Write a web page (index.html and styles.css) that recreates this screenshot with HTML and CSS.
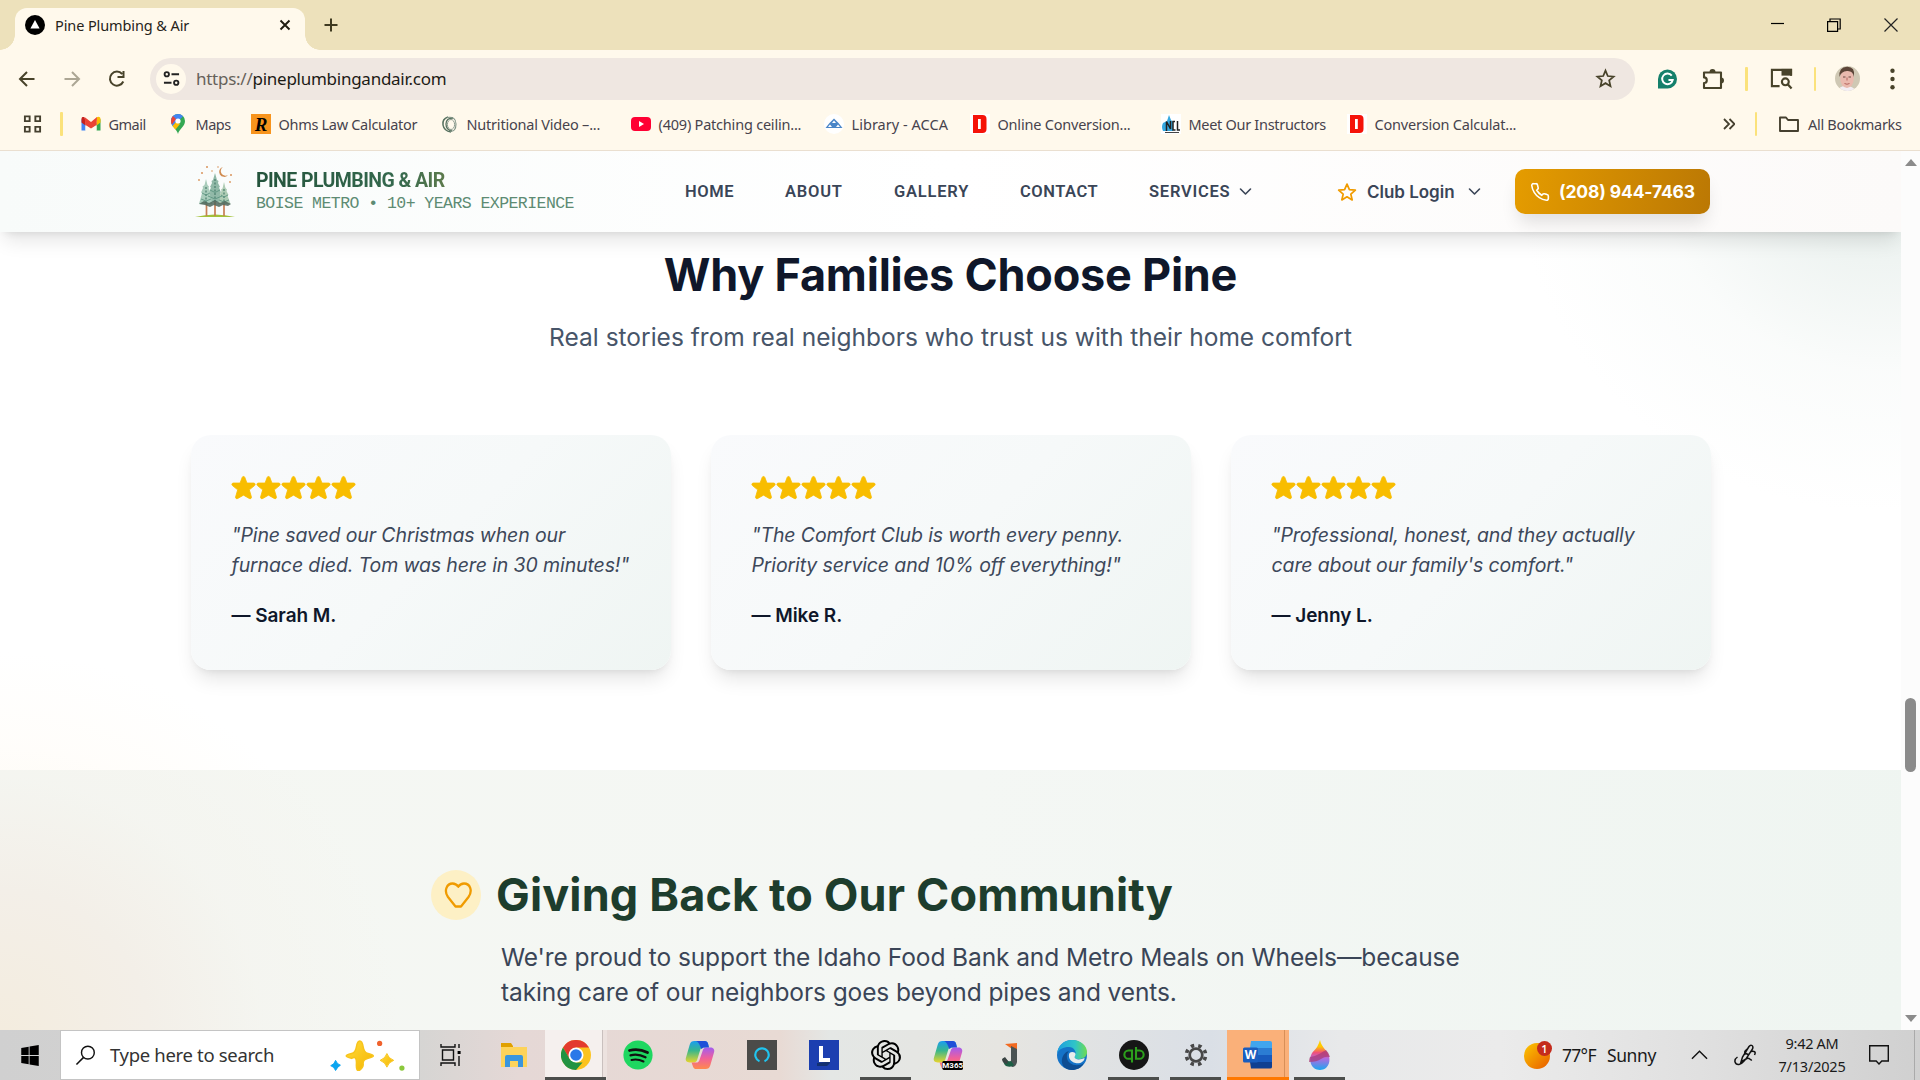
FILE: index.html
```html
<!DOCTYPE html>
<html lang="en">
<head>
<meta charset="utf-8">
<title>Pine Plumbing &amp; Air</title>
<link rel="stylesheet" href="styles.css">
</head>
<body>
<svg class="defs" width="0" height="0">
  <defs>
    <linearGradient id="copA" x1="0" y1="0" x2="0" y2="1"><stop offset="0" stop-color="#1b9df0"/><stop offset=".45" stop-color="#38b78c"/><stop offset="1" stop-color="#e8d52c"/></linearGradient>
    <linearGradient id="copB" x1="0" y1="0" x2="0" y2="1"><stop offset="0" stop-color="#a25cf0"/><stop offset=".5" stop-color="#f0609a"/><stop offset="1" stop-color="#ff8a4c"/></linearGradient>
    <linearGradient id="gold" x1="0" y1="0" x2="1" y2="1"><stop offset="0" stop-color="#ffdc3c"/><stop offset="1" stop-color="#f5b400"/></linearGradient>
    <linearGradient id="sun" x1="0" y1="0" x2="1" y2="1"><stop offset="0" stop-color="#fcc800"/><stop offset="1" stop-color="#e85a00"/></linearGradient>
    <linearGradient id="edgeA" x1="0" y1="0" x2="1" y2="0"><stop offset="0" stop-color="#1e9de0"/><stop offset=".6" stop-color="#2fc4c8"/><stop offset="1" stop-color="#6fdc50"/></linearGradient>
    <linearGradient id="drop" x1="0" y1="0" x2="0" y2="1"><stop offset="0" stop-color="#ffd400"/><stop offset=".22" stop-color="#ffc800"/><stop offset=".42" stop-color="#f0507a"/><stop offset=".62" stop-color="#b06ae0"/><stop offset="1" stop-color="#1aa8f0"/></linearGradient>
    <symbol id="star" viewBox="1 1.200 18 18"><path d="M9.05 2.93c.3-.92 1.6-.92 1.9 0l1.52 4.07h4.9c.97 0 1.370 1.240.6 1.810l-3.780 3.080 1.500 5.080c.3.920-.76 1.690-1.540 1.120L10 15.700l-4.150 2.390c-.78.570-1.830-.2-1.540-1.120l1.500-5.080L2.050 8.810c-.78-.57-.38-1.810.59-1.810h4.900z" stroke="#f8bd00" stroke-width=".6"/></symbol>
    <symbol id="staro" viewBox="0 0 24 24"><path d="M12 2.500l2.900 6.600 7.100.7-5.400 4.700 1.600 7L12 17.800l-6.200 3.700 1.600-7L2 9.800l7.100-.7z" fill="none" stroke="currentColor" stroke-width="2.100" stroke-linejoin="round"/></symbol>
    <symbol id="chev" viewBox="0 0 24 24"><path d="M4 8l8 8 8-8" fill="none" stroke="currentColor" stroke-width="2.600" stroke-linecap="round" stroke-linejoin="round"/></symbol>
    <symbol id="copilot" viewBox="0 0 32 32"><path d="M10 1h11c2 0 3 1 3.600 3l1 4h-6c-2 0-3 1-3.500 3L13 21c-.6 2-2 3-4 3H5c-3 0-5-2-4-5L5 5c.8-3 2.500-4 5-4z" fill="url(#copA)"/><path d="M11 1h10c2 0 3 1 3.600 3l1 4h-6l-2 1.500C16 7 15 1 11 1z" fill="#1f50d8"/><path d="M22 31H12c-2 0-3-1-3.600-3L7 24h5c2 0 3-1 3.500-3L19 11c.6-2 2-3 4-3h4c3 0 5 2 4 5l-4 14c-.8 3-2.500 4-5 4z" fill="url(#copB)"/></symbol>
    <symbol id="dbook" viewBox="0 0 20 20"><path fill="#fff" d="M0 0h20v20H0z"/><path d="M3 1h9.500Q16.500 1 16.500 5v10q0 4-4 4H3zM8 5v10h2.800V5z" fill="#f5130a" fill-rule="evenodd"/></symbol>
  </defs>
</svg>

<div class="screen">
  <div class="tabstrip">
    <div class="tab">
      <svg class="fav" viewBox="0 0 20 20"><circle cx="10" cy="10" r="10"/><path d="M10 5l4.600 8.500H5.400z" fill="#fff"/></svg>
      <span class="tab-title">Pine Plumbing &amp; Air</span>
      <svg class="tab-x" viewBox="0 0 12 12"><path d="M1.500 1.500l9 9M10.500 1.500l-9 9" stroke="#1f1c10" stroke-width="1.900"/></svg>
    </div>
    <svg class="plus" viewBox="0 0 14 14"><path d="M7 .5v13M.5 7h13" stroke="#3f3a20" stroke-width="2"/></svg>
    <div class="winbtns">
      <svg viewBox="0 0 14 14"><path d="M1 5.500h13" stroke="#000" stroke-width="1.200"/></svg>
      <svg viewBox="0 0 14 14"><path d="M.6 3.600h10v9.800H.6zM3 3.600V1h10.200v10h-2.600" fill="none" stroke="#000" stroke-width="1.200"/></svg>
      <svg viewBox="0 0 14 14"><path d="M.5.5l13 13M13.500.5l-13 13" stroke="#222" stroke-width="1.200"/></svg>
    </div>
  </div>

  <div class="toolbar">
    <svg class="nav-ic" viewBox="0 0 20 20"><path d="M17.500 10H3.500M10 3l-7 7 7 7" fill="none" stroke="#48432a" stroke-width="2"/></svg>
    <svg class="nav-ic dim" viewBox="0 0 20 20"><path d="M2.500 10h14M10 3l7 7-7 7" fill="none" stroke="#48432a" stroke-width="2"/></svg>
    <svg class="nav-ic" viewBox="0 0 20 20"><path d="M16.300 12.500A7 7 0 1 1 15.200 5M16.500 2v6h-6" fill="none" stroke="#48432a" stroke-width="2"/></svg>
    <div class="omni">
      <div class="site"><svg viewBox="0 0 18 18"><g fill="none" stroke="#222" stroke-width="2"><circle cx="4" cy="4.500" r="2.300"/><path d="M9 4.500h8M1 13.500h8"/><circle cx="14" cy="13.500" r="2.300"/></g></svg></div>
      <span class="url"><i>https://</i>pineplumbingandair.com</span>
      <svg class="omni-star" viewBox="0 0 24 24"><path d="M12 3l2.600 6.200 6.700.6-5.100 4.400 1.500 6.600L12 17.300l-5.700 3.500 1.500-6.600-5.100-4.400 6.700-.6z" fill="none" stroke="#48432a" stroke-width="2"/></svg>
    </div>
    <div class="exts">
      <svg class="e1" viewBox="0 0 20 20"><path d="M0 20V10A10 10 0 1 1 10 20z" fill="#15806b"/><path d="M14.500 6.500a5.600 5.600 0 1 0 1 4.500h-4.500" fill="none" stroke="#fff" stroke-width="2"/></svg>
      <svg class="e2" viewBox="0 0 22 22"><path d="M2 4.500h17v15.500H2v-5a2.800 2.800 0 0 0 0-5.600z" fill="none" stroke="#48432a" stroke-width="2.100" stroke-linejoin="round"/><path d="M7.500 4a3 3 0 0 1 6 0zM19 9.500a3 3 0 0 1 0 6z" fill="#48432a"/></svg>
      <b class="bar"></b>
      <svg class="e3" viewBox="0 0 24 24"><path d="M10 20H2V3h20v6" fill="none" stroke="#48432a" stroke-width="2.200"/><path fill="#48432a" d="M12 2h11v7H12z"/><circle cx="16" cy="15.500" r="3.600" fill="none" stroke="#48432a" stroke-width="2.200"/><path d="M18.500 18l4 4.500" stroke="#48432a" stroke-width="2.300"/></svg>
      <b class="bar"></b>
      <svg class="avatar" viewBox="0 0 25 25"><clipPath id="av"><circle cx="12.500" cy="12.500" r="12.500"/></clipPath><g clip-path="url(#av)"><path fill="#cfc8b4" d="M0 0h25v25H0z"/><path d="M3 25q1-5 8-5t10 5z" fill="#f3eef4"/><ellipse cx="12" cy="12.500" rx="6.800" ry="9.500" fill="#eab9ae"/><path d="M4.500 11Q3.500 1 12 .8T19 11Q18 4.500 12 5T4.500 11z" fill="#5c4538"/><path d="M8 11h2.500M13.500 11H16" stroke="#6b4a42" stroke-width="1.200"/><path d="M9.500 17.500q2.500 1.500 5 0M12 11.500v3" fill="none" stroke="#b4635c"/></g></svg>
      <svg class="dots" viewBox="0 0 4 20"><circle cx="2" cy="2.500" r="2"/><circle cx="2" cy="10" r="2"/><circle cx="2" cy="17.500" r="2"/></svg>
    </div>
  </div>

  <div class="bookmarks">
    <svg class="apps" viewBox="0 0 20 20"><path d="M2 2h5v5H2zM13 2h5v5h-5zM2 13h5v5H2zM13 13h5v5h-5z" fill="none" stroke="#45402f" stroke-width="2"/></svg>
    <b class="bar"></b>
    <div class="bm-list">
      <span class="bm t8"><svg viewBox="0 0 20 20"><path d="M.5 5v11.500h4V9z" fill="#4285f4"/><path d="M19.500 5v11.500h-4V9z" fill="#34a853"/><path d="M15.500 6.500v5l4-3V5c0-2.500-2.500-3-4-1.500z" fill="#fbbc04"/><path d="M.5 5v3.500l4 3v-5l-1-3C2 2.500.5 3 .5 5z" fill="#c5221f"/><path d="M3.500 3.500L10 8.500l6-5 -.5 8L10 15 4.500 11.500z" fill="#ea4335" transform="translate(0 -.5)"/><path d="M4.500 11.500L10 15.500l5.500-4v5h-11z" fill="#fff9ec"/></svg>Gmail</span>
      <span class="bm t8"><svg viewBox="0 0 20 20"><path d="M10 20C9 15 3 12.500 3 7a7 7 0 0 1 14 0c0 5.500-6 8-7 13z" fill="#34a853"/><path d="M3 7a7 7 0 0 1 12-4.800L5 12.500Q3 10 3 7z" fill="#4285f4"/><path d="M3 7q0-3 2-5l3 3-4 5.500Q3 9 3 7z" fill="#ea4335"/><path d="M4.500 12L8 8l4 2-4.500 5.500z" fill="#fbbc04"/><circle cx="10" cy="7" r="2.600" fill="#fff"/></svg>Maps</span>
      <span class="bm t5"><svg viewBox="0 0 20 20"><path fill="#f7941d" d="M0 0h20v20H0z"/><text x="10" y="16.500" text-anchor="middle" class="serif-r">R</text></svg>Ohms Law Calculator</span>
      <span class="bm t4"><svg viewBox="0 0 20 20"><g fill="none" stroke="#55705e"><path d="M9 3Q3 5 4 11t8 7" stroke-width="1.500"/><path d="M14 4Q7 4 7 10t6 7" stroke-width="1.300"/><path d="M8 3.500Q17 2 17 10t-6 7" stroke="#7d9184" stroke-width="1.100"/><ellipse cx="12" cy="10.500" rx="3.600" ry="5" stroke="#8a9a8e"/></g></svg>Nutritional Video –...</span>
      <span class="bm t4"><svg viewBox="0 0 20 20"><rect y="3" width="20" height="14" rx="4" fill="#ff0033"/><path d="M8 7l5 3-5 3z" fill="#fff"/></svg>(409) Patching ceilin...</span>
      <span class="bm t2"><svg viewBox="0 0 20 20"><circle cx="10" cy="10" r="10" fill="#fff"/><path d="M1.500 14l4-5L10 4.500 14.500 9l4 5z" fill="#4a86c8"/><path d="M4 13l2-2.500L8 13zM12 13l2-2.500 2 2.500zM8 9l2-2.500L12 9z" fill="#fff"/></svg>Library - ACCA</span>
      <span class="bm t4"><svg viewBox="0 0 20 20"><use href="#dbook"/></svg>Online Conversion...</span>
      <span class="bm t5"><svg viewBox="0 0 20 20"><path fill="#fff" d="M0 0h20v20H0z"/><path d="M8 1l2 5 2 2v9H2Q0 13 2 9l4-2z" fill="#35a8e0"/><path d="M5.500 17V7.500l4 7.500V7M14 7.500h-2V16h2.500M16.500 7v9H19" fill="none" stroke="#222" stroke-width="1.500"/><path d="M4 18.500h14" stroke="#444"/></svg>Meet Our Instructors</span>
      <span class="bm t4"><svg viewBox="0 0 20 20"><use href="#dbook"/></svg>Conversion Calculat...</span>
    </div>
    <svg class="more" viewBox="0 0 12 12"><path d="M1 1l5 5-5 5M6.500 1l5 5-5 5" fill="none" stroke="#45402f" stroke-width="1.800"/></svg>
    <b class="bar b2"></b>
    <span class="bm t5 all"><svg viewBox="0 0 22 20"><path d="M2 16.500v-13h6l2 2.500h10v11H2z" fill="none" stroke="#45402f" stroke-width="1.900" stroke-linejoin="round"/></svg>All Bookmarks</span>
  </div>

  <div class="viewport">
    <div class="page">
      <header class="site-head">
        <div class="brand">
          <svg class="logo" viewBox="0 0 50 54">
            <path d="M5 52q20-5 40 0z" fill="#a3c23a"/>
            <g stroke="#c77f55" stroke-width="1.700"><path d="M16.500 38v13M25 36v15M34 38v13"/></g>
            <g opacity=".85">
            <path d="M25 8l2 7 1.500 1-.5 2 2 4-1 .5 2 5-1 .5 3 9H17l3-9-1-.5 2-5-1-.5 2-4-.5-2 1.500-1z" fill="#7fae9a"/>
            <path d="M16 14l1.500 6 1.500 1.500-.5 1.500 2 4.500-1 .5 3 11H9l3-11-1-.5 2-4.500-.5-1.500L14.500 20z" fill="#9cc4b0"/>
            <path d="M34 17l1.500 6 1.500 1.500-.5 1.500 2 4-1 .5 3 8.500H28l2.500-8.500-1-.5 2-4-.5-1.500 1.500-1z" fill="#a2c4a8"/>
            </g>
            <path d="M25 14v22M16 22v16M34 24v14" stroke="#4a7d6d" stroke-width="1.200" stroke-dasharray="2 1.500"/>
            <path d="M20 25l5 2.500 5-2.500M18 31l7 3 7-3M12 28l4 2 4-2M11 34l5 2 5-2M31 30l3 2 4-2M29 35l5 2 5-2" fill="none" stroke="#5e9582" stroke-width=".9"/>
            <path d="M9 39l5-3 5 2 6-3 5 3 5-2 6 3-3 2-5-1-4 2-5-2-4 2-5-2z" fill="#4f665b" opacity=".85"/>
            <path d="M33 2a5 5 0 1 0 5 8 4.500 4.500 0 0 1-5-8z" fill="#d08b50"/>
            <g fill="#d9955c"><circle cx="17" cy="2" r="1"/><circle cx="28" cy="2" r=".8"/><circle cx="12" cy="8" r="1"/><circle cx="22" cy="6" r=".8"/><circle cx="41" cy="10" r="1"/><circle cx="9" cy="15" r=".9"/><circle cx="40" cy="17" r=".9"/></g>
          </svg>
          <div class="brand-text"><span class="brand-name">PINE PLUMBING &amp; AIR</span><span class="brand-sub">BOISE METRO • 10+ YEARS EXPERIENCE</span></div>
        </div>
        <nav class="menu">
          <a class="m1">HOME</a><a class="m2">ABOUT</a><a class="m3">GALLERY</a><a class="m4">CONTACT</a><a class="m5">SERVICES<svg><use href="#chev"/></svg></a>
        </nav>
        <div class="club"><svg class="cs"><use href="#staro"/></svg><span>Club Login</span><svg class="cc"><use href="#chev"/></svg></div>
        <a class="call"><svg viewBox="0 0 24 24"><path d="M22 16.900v3a2 2 0 0 1-2.200 2 19.800 19.800 0 0 1-8.600-3.100 19.500 19.500 0 0 1-6-6A19.800 19.800 0 0 1 2.100 4.200 2 2 0 0 1 4.100 2h3a2 2 0 0 1 2 1.700c.1 1 .4 1.900.7 2.800a2 2 0 0 1-.5 2.100L8.100 9.900a16 16 0 0 0 6 6l1.300-1.300a2 2 0 0 1 2.100-.4c.9.300 1.800.6 2.800.7a2 2 0 0 1 1.700 2z" fill="none" stroke="#fff" stroke-width="1.900"/></svg><span>(208) 944-7463</span></a>
      </header>

      <section class="reviews">
        <h2>Why Families Choose Pine</h2>
        <p class="lead">Real stories from real neighbors who trust us with their home comfort</p>
        <div class="cards">
          <article class="card">
            <div class="stars"><svg><use href="#star"/></svg><svg><use href="#star"/></svg><svg><use href="#star"/></svg><svg><use href="#star"/></svg><svg><use href="#star"/></svg></div>
            <p>"Pine saved our Christmas when our<br>furnace died. Tom was here in 30 minutes!"</p>
            <strong>— Sarah M.</strong>
          </article>
          <article class="card">
            <div class="stars"><svg><use href="#star"/></svg><svg><use href="#star"/></svg><svg><use href="#star"/></svg><svg><use href="#star"/></svg><svg><use href="#star"/></svg></div>
            <p>"The Comfort Club is worth every penny.<br>Priority service and 10% off everything!"</p>
            <strong>— Mike R.</strong>
          </article>
          <article class="card">
            <div class="stars"><svg><use href="#star"/></svg><svg><use href="#star"/></svg><svg><use href="#star"/></svg><svg><use href="#star"/></svg><svg><use href="#star"/></svg></div>
            <p>"Professional, honest, and they actually<br>care about our family's comfort."</p>
            <strong>— Jenny L.</strong>
          </article>
        </div>
      </section>

      <section class="giving">
        <div class="giving-head">
          <div class="heart"><svg viewBox="0 0 28 28"><path d="M11.500 25.500L4 16C-.5 9.500 3 2.500 8.500 2.500q3.500 0 5.800 3.200Q16.500 2.500 20 2.500C26 2.500 29 9.500 24.500 16L17 25.500z" fill="none" stroke="#f09b00" stroke-width="2.300" stroke-linejoin="round"/></svg></div>
          <h2>Giving Back to Our Community</h2>
        </div>
        <p>We're proud to support the Idaho Food Bank and Metro Meals on Wheels—because<br>taking care of our neighbors goes beyond pipes and vents.</p>
      </section>
    </div>
    <div class="scroll"><i class="up"></i><i class="thumb"></i><i class="down"></i></div>
  </div>

  <div class="taskbar">
    <div class="start"><svg viewBox="0 0 20 24"><path d="M0 3.500L8.500 2v9.500H0zM9.500 1.800L20 0v11.500H9.500zM0 12.500h8.500V22L0 20.700zM9.500 12.500H20V24l-10.500-1.800z"/></svg></div>
    <div class="search">
      <svg class="mag" viewBox="0 0 22 22"><circle cx="13.500" cy="8" r="6.700" fill="none" stroke="#111" stroke-width="1.500"/><path d="M9 13L1.500 20.500" stroke="#111" stroke-width="1.600"/></svg>
      <span>Type here to search</span>
      <svg class="spark" viewBox="0 0 78 32"><path d="M30 1q2.500 0 3.500 6t5 7q5.500 1.500 5.500 2.500t-5.500 2.500-5 5.500-3.500 6.500-3.500-6.500-5-5.500q-5.500-1.500-5.500-2.500t5.500-2.500q4-1 5-7t3.500-6z" fill="url(#gold)" stroke="#f8c41c" stroke-width="1.500" stroke-linejoin="round"/><path d="M58 14q1.500 5 7 7-5.500 2-7 7-1.500-5-7-7 5.500-2 7-7z" fill="url(#gold)" stroke="#f8c41c" stroke-linejoin="round"/><path d="M5 21q1.500 4 5 5-3 1.500-5 5.500-1.500-4-5-5 4-1.500 5-5.500z" fill="#0aa5f0" stroke="#0aa5f0" stroke-linejoin="round"/><circle cx="50.500" cy="3.500" r="2.700" fill="#f0622d"/><circle cx="73.500" cy="29" r="2.700" fill="#8bc83c"/></svg>
    </div>
    <div class="apps-row">
      <div class="app"><svg class="s22" viewBox="0 0 22 22"><path d="M1 0v3h14V0M1 22v-3h14v3M2.500 6h11v10h-11zM19 0v4M19 12v10" fill="none" stroke="#111" stroke-width="1.400"/><path d="M17.600 7h3v3h-3z"/></svg></div>
      <div class="app"><svg viewBox="0 0 30 30"><path d="M2 3h10l2 3v4H2z" fill="#e0a000"/><path d="M2 7h26v20H2z" fill="#fdd35a"/><path d="M6 27V17q0-2 2-2h14q2 0 2 2v10h-5v-6h-8v6z" fill="#3a96dd"/></svg></div>
      <div class="app on light"><svg viewBox="0 0 30 30"><circle cx="15" cy="15" r="15" fill="#fcc31e"/><path d="M2 7.500A15 15 0 0 1 28 7.500H15L8.500 19z" fill="#e33b2e"/><path d="M2 7.500L8.500 18.700 15 22.500h6.500L15 30A15 15 0 0 1 2 7.500z" fill="#229342"/><circle cx="15" cy="15" r="7.500" fill="#fff"/><circle cx="15" cy="15" r="5.800" fill="#2a78e8"/></svg></div>
      <div class="app"><svg viewBox="0 0 30 30"><circle cx="15" cy="15" r="14.600" fill="#1ed760"/><g fill="none" stroke="#111" stroke-linecap="round"><path d="M6.500 10.500q9-2.500 18 2" stroke-width="2.800"/><path d="M7.500 15.300q7.500-2 15 2" stroke-width="2.300"/><path d="M8.500 20q6-1.500 12 1.500" stroke-width="2"/></g></svg></div>
      <div class="app"><svg><use href="#copilot"/></svg></div>
      <div class="app"><svg viewBox="0 0 30 30"><path fill="#4b4b49" d="M0 0h30v30H0z"/><path d="M12.500 21.200a6.700 6.700 0 1 1 5 0" fill="none" stroke="#20c4ee" stroke-width="2.200"/></svg></div>
      <div class="app"><svg viewBox="0 0 30 30"><path fill="#1c3fb0" d="M0 0h30v30H0z"/><path d="M8 23l9-1 4-1v2l-3 3H8z" fill="#123070"/><path d="M10 6h4v12h7v4H10z" fill="#fff"/></svg></div>
      <div class="app on"><svg viewBox="0 0 24 24"><path d="M22.2819 9.8211a5.9847 5.9847 0 0 0-.5157-4.9108 6.0462 6.0462 0 0 0-6.5098-2.9A6.0651 6.0651 0 0 0 4.9807 4.1818a5.9847 5.9847 0 0 0-3.9977 2.9 6.0462 6.0462 0 0 0 .7427 7.0966 5.98 5.98 0 0 0 .511 4.9107 6.051 6.051 0 0 0 6.5146 2.9001A5.9847 5.9847 0 0 0 13.2599 24a6.0557 6.0557 0 0 0 5.7718-4.2058 5.9894 5.9894 0 0 0 3.9977-2.9001 6.0557 6.0557 0 0 0-.7475-7.0729zm-9.022 12.6081a4.4755 4.4755 0 0 1-2.8764-1.0408l.1419-.0804 4.7783-2.7582a.7948.7948 0 0 0 .3927-.6813v-6.7369l2.02 1.1686a.071.071 0 0 1 .038.052v5.5826a4.504 4.504 0 0 1-4.4945 4.4944zm-9.6607-4.1254a4.4708 4.4708 0 0 1-.5346-3.0137l.142.0852 4.783 2.7582a.7712.7712 0 0 0 .7806 0l5.8428-3.3685v2.3324a.0804.0804 0 0 1-.0332.0615L9.74 19.9502a4.4992 4.4992 0 0 1-6.1408-1.6464zM2.3408 7.8956a4.485 4.485 0 0 1 2.3655-1.9728V11.6a.7664.7664 0 0 0 .3879.6765l5.8144 3.3543-2.0201 1.1685a.0757.0757 0 0 1-.071 0l-4.8303-2.7865A4.504 4.504 0 0 1 2.3408 7.872zm16.5963 3.8558L13.1038 8.364 15.1192 7.2a.0757.0757 0 0 1 .071 0l4.8303 2.7913a4.4944 4.4944 0 0 1-.6765 8.1042v-5.6772a.79.79 0 0 0-.407-.667zm2.0107-3.0231l-.142-.0852-4.7735-2.7818a.7759.7759 0 0 0-.7854 0L9.409 9.2297V6.8974a.0662.0662 0 0 1 .0284-.0615l4.8303-2.7866a4.4992 4.4992 0 0 1 6.6802 4.66zM8.3065 12.863l-2.02-1.1638a.0804.0804 0 0 1-.038-.0567V6.0742a4.4992 4.4992 0 0 1 7.3757-3.4537l-.142.0805L8.704 5.459a.7948.7948 0 0 0-.3927.6813zm1.0976-2.3654l2.602-1.4998 2.6069 1.4998v2.9994l-2.5974 1.4997-2.6067-1.4997z"/></svg></div>
      <div class="app"><svg viewBox="0 0 32 32"><use href="#copilot" width="32" height="32"/><rect x="10" y="22.500" width="22" height="9.500" rx="1.500"/><text x="21" y="30.300" text-anchor="middle" class="m365">M365</text></svg></div>
      <div class="app"><svg viewBox="0 0 30 30"><path d="M10 4l12-1v6h-5z" fill="#f26a21"/><path d="M16 6l6 3v13q-1 5-5 5l-3-4q2 0 2-3z" fill="#4a5353"/><path d="M8 18l4 2q1 2 4 1l3 4q-3 3-8 1-3-2-3-8z" fill="#1c5f45"/><path d="M7 19l3-2 3 4-1 3q-5-1-5-5z" fill="#3a4343"/></svg></div>
      <div class="app"><svg viewBox="0 0 30 30"><circle cx="15" cy="15" r="15" fill="#1573c8"/><path d="M0 14C1 5 7 0 15 0c9 0 15 6 15 12 0 5-4 7-8 7-5 0-6-2-4-4 2-3-1-8-6-8C6 7 2 9 0 14z" fill="url(#edgeA)"/><path d="M12 11c-3 3-3 9 1 12 4 3 10 3 14 0-3 5-7 7-12 7-8 0-11-6-10-11 1-4 3-7 7-8z" fill="#0e4d92"/><path d="M12.500 13c2-2 6-1 6 1s-2 3 0 4.500 6 1 9-.5c0 4-5 6-9 5-5-1-8-6-6-10z" fill="#e8ecec"/></svg></div>
      <div class="app on"><svg viewBox="0 0 30 30"><circle cx="15" cy="15" r="15" fill="#161616"/><g fill="none" stroke="#2ca01c" stroke-width="2.100"><path d="M13 22.500V10.500H9.500a4 4 0 0 0 0 8.300H13M17 7v11.800h3.500a4 4 0 0 0 0-8.300H17"/></g></svg></div>
      <div class="app on"><svg class="s24" viewBox="0 0 24 24"><circle cx="12" cy="12" r="6.300" fill="none" stroke="#484848" stroke-width="2.700"/><circle cx="12" cy="12" r="9.600" fill="none" stroke="#484848" stroke-width="3.600" stroke-dasharray="3.400 4.140" stroke-dashoffset="-2"/></svg></div>
      <div class="app on word"><svg viewBox="0 0 30 30"><path d="M8 1h19q2 0 2 2v5H7z" fill="#41a5ee"/><path d="M7 8h22v7H7z" fill="#2b7cd3"/><path d="M7 15h22v7H7z" fill="#185abd"/><path d="M7 22h22v5q0 1.500-2 1.500H8z" fill="#103f91"/><rect y="7.500" width="15" height="15" rx="1.500" fill="#1a5dbe"/><text x="7.500" y="19" text-anchor="middle" class="ww">W</text></svg></div>
      <div class="app on"><svg viewBox="0 0 30 30"><path d="M15 0q1 5 7 11c7 8 3 19-7 19S1 19 7 12q6-5 8-12z" transform="translate(1.500 0) scale(.9 1)" fill="url(#drop)"/><path d="M5 17q4 0 9-3t7-4q3 3 4 7-5-1-9 2t-12 3q0-3 1-5z" fill="#a83c78" opacity=".75"/></svg></div>
    </div>
    <div class="tray">
      <svg class="sun" viewBox="0 0 28 28"><circle cx="13" cy="15" r="13" fill="url(#sun)"/><circle cx="20.500" cy="7.500" r="7.500" fill="#c42b1c"/><text x="20.500" y="11.500" text-anchor="middle" class="badge">1</text></svg>
      <span class="temp">77°F</span><span class="sunny">Sunny</span>
      <svg class="caret" viewBox="0 0 18 10"><path d="M1 9l8-8 8 8" fill="none" stroke="#111" stroke-width="1.500"/></svg>
      <svg class="pen" viewBox="0 0 22 22"><path d="M7 18l1.500-5L15 2.500q1.500-2 3-1T18.500 5L12 15zM11 9l4 2M3.500 13C-1 16 1 21 5 20.500s5-5 8-6 3 2 5 1.500M13 5q-3 2-2 6M16 8q2-1 4-.5t.5 3.500" fill="none" stroke="#111" stroke-width="1.500"/></svg>
      <div class="clock"><span>9:42 AM</span><span class="date">7/13/2025</span></div>
      <svg class="note" viewBox="0 0 20 20"><path d="M.7.700h18.600v15.300h-6.500L10 19l-2.800-3H.7z" fill="none" stroke="#111" stroke-width="1.400"/></svg>
      <i class="peek"></i>
    </div>
  </div>
</div>
</body>
</html>
```
FILE: styles.css
```css
* { box-sizing: border-box; }
body { margin: 0; }
.defs { position: absolute; }
svg { display: block; flex: none; }
h2, p { margin: 0; }
.screen {
  width: 1920px; height: 1080px; overflow: hidden;
  display: flex; flex-direction: column;
  font-family: "Noto Sans", sans-serif; white-space: nowrap;
}

/* browser tab strip */
.tabstrip { height: 50px; flex: none; display: flex; align-items: center; background: #ede1bb; padding-left: 15px; }
.tab {
  position: relative; align-self: flex-end; width: 290px; height: 42px;
  background: #fff9ec; border-radius: 12px 12px 0 0;
  display: flex; align-items: center; padding: 0 14px 8px 10px;
}
.tab::before, .tab::after { content: ""; position: absolute; bottom: 0; width: 15px; height: 15px; }
.tab::before { left: -15px; background: radial-gradient(circle at 0 0, #ede1bb 14.500px, #fff9ec 15px); }
.tab::after { right: -15px; background: radial-gradient(circle at 100% 0, #ede1bb 14.500px, #fff9ec 15px); }
.fav { width: 20px; height: 20px; margin-right: 10px; }
.tab-title { font-size: 14.500px; letter-spacing: -.1px; color: #26231a; flex: 1; }
.tab-x { width: 12px; height: 12px; }
.plus { width: 14px; height: 14px; margin-left: 19px; }
.winbtns { margin-left: auto; display: flex; gap: 43px; padding-right: 22px; }
.winbtns svg { width: 14px; height: 14px; }

/* address row */
.toolbar { height: 57px; flex: none; display: flex; align-items: center; background: #fff9ec; padding-left: 17px; }
.nav-ic { width: 20px; height: 20px; margin-right: 25px; }
.dim { opacity: .45; }
.omni {
  width: 1485px; height: 42px; margin-left: -2px; border-radius: 21px; background: #efe7e1;
  display: flex; align-items: center; padding: 0 19px 0 6px;
}
.site { width: 30px; height: 30px; border-radius: 50%; background: #fff9ec; display: flex; align-items: center; justify-content: center; }
.site svg { width: 17px; height: 17px; }
.url { flex: 1; margin-left: 10px; font-size: 17px; letter-spacing: -.26px; color: #1d1b16; }
.url i { font-style: normal; color: #66615a; }
.omni-star { width: 21px; height: 21px; }
.exts { display: flex; align-items: center; }
.bar { width: 2.500px; height: 24px; border-radius: 1px; background: #fbe27b; flex: none; }
.e1 { width: 19px; height: 20px; margin-left: 23px; }
.e2 { width: 22px; height: 22px; margin: 0 21px 0 25px; }
.e3 { width: 23px; height: 23px; margin: 0 21px 0 22px; }
.avatar { width: 25px; height: 25px; margin-left: 19px; }
.dots { width: 5px; height: 22px; margin-left: 30px; fill: #48432a; }

/* bookmark row */
.bookmarks { height: 44px; flex: none; display: flex; align-items: center; background: #fff9ec; border-bottom: 1px solid #eadfd0; padding: 0 0 9px 23px; }
.bookmarks > .bar { margin-left: 18px; }
.apps { width: 19px; height: 20px; }
.bm-list { display: grid; grid-template-columns: 87px 83px 188px 192px 193px 146px 191px 186px 376px; margin-left: 18px; }
.bm { display: flex; align-items: center; gap: 8px; font-size: 14.500px; color: #47434c; }
.bm svg { width: 20px; height: 20px; }
.t8 { letter-spacing: -.5px; }
.t5 { letter-spacing: -.3px; }
.t4 { letter-spacing: -.21px; }
.t2 { letter-spacing: .04px; }
.more { width: 12px; height: 12px; }
.bookmarks > .b2 { margin: 0 21px 0 20px; }
.all svg { width: 22px; }

/* website */
.viewport { height: 879px; flex: none; display: flex; }
.page {
  width: 1901px; height: 879px; overflow: hidden; position: relative;
  background: #fff; font-family: Inter, sans-serif;
  display: flex; flex-direction: column;
}
.site-head {
  height: 81px; flex: none; position: relative; z-index: 2; padding-left: 190px;
  display: flex; align-items: center;
  background: linear-gradient(90deg, #f8fbfa, #fff 50%, #fcfaf9);
  box-shadow: 0 12px 19px -4px rgba(0, 0, 0, .11), 0 5px 8px -5px rgba(0, 0, 0, .1);
}
.brand { width: 495px; display: flex; align-items: center; }
.logo { width: 50px; height: 54px; margin-right: 16px; }
.brand-text { display: flex; flex-direction: column; }
.brand-name {
  font: 700 19.500px/23px Roboto, sans-serif; letter-spacing: -.58px; width: 190px;
  background: linear-gradient(90deg, #24543c, #35694e 75%, #5d7a4c);
  -webkit-background-clip: text; background-clip: text; color: transparent;
}
.brand-sub { font: 16.500px/23px "Liberation Mono", monospace; letter-spacing: -.55px; color: #5d8b73; }
.menu { display: flex; font: 600 16.500px/24px Roboto, sans-serif; color: #3a4557; }
.menu a { display: flex; align-items: center; }
.menu svg { width: 15px; height: 15px; margin-left: 8px; }
.m1 { width: 100px; letter-spacing: .6px; }
.m2 { width: 109px; letter-spacing: .78px; }
.m3 { width: 126px; letter-spacing: .78px; }
.m4 { width: 129px; letter-spacing: .54px; }
.m5 { width: 188px; letter-spacing: .76px; }
.club { width: 178px; display: flex; align-items: center; font-size: 17px; font-weight: 600; letter-spacing: -.02px; color: #3a4557; }
.cs { width: 20px; height: 20px; color: #f09b00; margin-right: 10px; }
.cc { width: 15px; height: 15px; margin-left: 12px; }
.call {
  width: 195px; height: 45px; border-radius: 10px; color: #fff;
  background: linear-gradient(100deg, #e59c00, #bb7804);
  box-shadow: 0 12px 18px -4px rgba(0, 0, 0, .12);
  display: flex; align-items: center; gap: 9px; padding-left: 15px;
  font-size: 17.500px; font-weight: 700; letter-spacing: -.14px;
}
.call svg { width: 20px; height: 20px; }
.reviews {
  height: 538px; flex: none; text-align: center;
  background: radial-gradient(circle at 1880px -90px, #e2ebe8 0, #eff4f2 120px, rgba(249, 251, 250, .8) 230px, rgba(255, 255, 255, 0) 370px), radial-gradient(circle at 0 800px, #f8f3e4 0, rgba(255, 253, 250, .9) 290px, rgba(255, 255, 255, 0) 380px), #fff;
}
.reviews h2 { font-size: 45px; line-height: 50px; font-weight: 700; color: #0f172a; padding-top: 18px; letter-spacing: -.24px; }
.lead { font-size: 24.500px; line-height: 35px; padding-top: 20px; color: #475569; letter-spacing: .01px; }
.cards { display: grid; grid-template-columns: repeat(3, 1fr); gap: 40px; padding: 80px 190.500px 0; text-align: left; }
.card {
  height: 235px; border-radius: 20px; padding: 40px;
  background: linear-gradient(135deg, #f9fafc, #f6f9f9 50%, #eff5f3);
  box-shadow: 0 13px 19px -4px rgba(0, 0, 0, .1), 0 5px 8px -5px rgba(0, 0, 0, .1);
}
.stars { display: flex; height: 25px; margin-bottom: 20px; }
.stars svg { width: 25px; height: 25px; fill: #f8bd00; }
.card p { font-size: 19.500px; line-height: 30px; font-style: italic; color: #3d485a; letter-spacing: -.12px; padding-left: 1px; }
.card strong { display: block; padding: 21px 0 0 1px; font-size: 19px; line-height: 30px; font-weight: 600; color: #0f172a; letter-spacing: -.05px; }
.giving {
  flex: 1; padding: 98px 0 0 431px;
  background: radial-gradient(circle at 0 270px, #f3ecde 0, #f3efe8 150px, rgba(244, 244, 239, .7) 260px, rgba(245, 247, 243, 0) 400px), linear-gradient(100deg, #f5f7f2, #f4f7f4 50%, #eff5f1);
}
.giving-head { display: flex; align-items: center; gap: 15px; height: 54px; }
.heart { width: 50px; height: 50px; border-radius: 50%; background: #fdf0c5; display: flex; align-items: center; justify-content: center; }
.heart svg { width: 28px; height: 28px; margin-left: 3px; }
.giving h2 { font-size: 45px; line-height: 54px; font-weight: 700; letter-spacing: .14px; color: #1d3d2d; }
.giving p { margin: 18px 0 0 70px; font-size: 24.500px; line-height: 35px; letter-spacing: -.1px; color: #3a4557; }
.scroll { width: 19px; background: #fcfcfc; display: flex; flex-direction: column; align-items: center; }
.up, .down { border: 6.500px solid transparent; height: 0; }
.up { border-top: 0; border-bottom: 7px solid #8b8b8b; margin-top: 8px; }
.down { border-bottom: 0; border-top: 7px solid #8b8b8b; margin: 243px 0 0; }
.thumb { width: 11px; height: 74px; border-radius: 6px; background: #8b8b8b; margin-top: 532px; }

/* taskbar */
.taskbar {
  height: 50px; flex: none; display: flex; color: #1a1a1a;
  background: linear-gradient(90deg, #d0d0d0 0, #d6d5d3 420px, #e5d8d6 520px, #e8dad4 780px, #e4e7e5 830px, #e6e5e1 1000px, #dadfe6 1210px, #e8e9ea 1340px, #ebebeb 1500px, #e0e0e0 1700px, #d0d0d0 1920px);
}
.start { width: 60px; display: flex; align-items: center; justify-content: center; }
.start svg { width: 20px; height: 21px; }
.search { width: 360px; background: #fff; border: 1px solid #c4c4c4; display: flex; align-items: center; padding-left: 14px; }
.mag { width: 21px; height: 21px; }
.search span { width: 220px; margin-left: 14px; padding-bottom: 2px; font-size: 18.500px; letter-spacing: -.33px; color: #333; }
.spark { width: 77px; height: 31px; }
.apps-row { display: flex; margin-left: 1px; }
.app { width: 62px; position: relative; display: flex; align-items: center; justify-content: center; }
.app svg { width: 30px; height: 30px; }
.app .s22 { width: 22px; height: 22px; margin-right: 2px; }
.app .s24 { width: 24px; height: 24px; }
.on::after { content: ""; position: absolute; bottom: 0; left: 5px; width: 51px; height: 3px; background: #4c4e4c; }
.light { background: linear-gradient(90deg, #f5f0ee 57px, #c9c0be 57px, #c9c0be 58px, #ece2df 58px); }
.light::after { left: 0; width: 61px; }
.word { background: linear-gradient(90deg, #fab079 57px, #d88f58 57px, #d88f58 58px, #fab079 58px); }
.word::after { left: 0; width: 62px; background: #ff7800; }
.serif-r { font: italic 700 19px "Liberation Serif", serif; }
.m365 { font: 700 8.500px Roboto, sans-serif; fill: #fff; }
.ww { font: 700 12px "Open Sans", sans-serif; fill: #fff; }
.badge { font: 600 11px "Open Sans", sans-serif; fill: #fff; }
.tray { flex: 1; display: flex; align-items: center; padding-left: 173px; }
.sun { width: 28px; height: 28px; }
.temp { width: 45px; margin-left: 10px; font-size: 17.500px; letter-spacing: -.7px; }
.sunny { width: 84px; font-size: 17.500px; letter-spacing: -.4px; }
.caret { width: 17px; height: 10px; }
.pen { width: 22px; height: 22px; margin-left: 26px; }
.clock { width: 90px; margin-left: 11px; padding-bottom: 1px; display: flex; flex-direction: column; align-items: center; font-size: 14.500px; line-height: 23px; letter-spacing: -.3px; }
.date { letter-spacing: -.2px; }
.note { width: 20px; height: 20px; margin-left: 12px; }
.peek { margin-left: auto; margin-right: 5px; width: 1px; height: 50px; background: #aaa; }
```
